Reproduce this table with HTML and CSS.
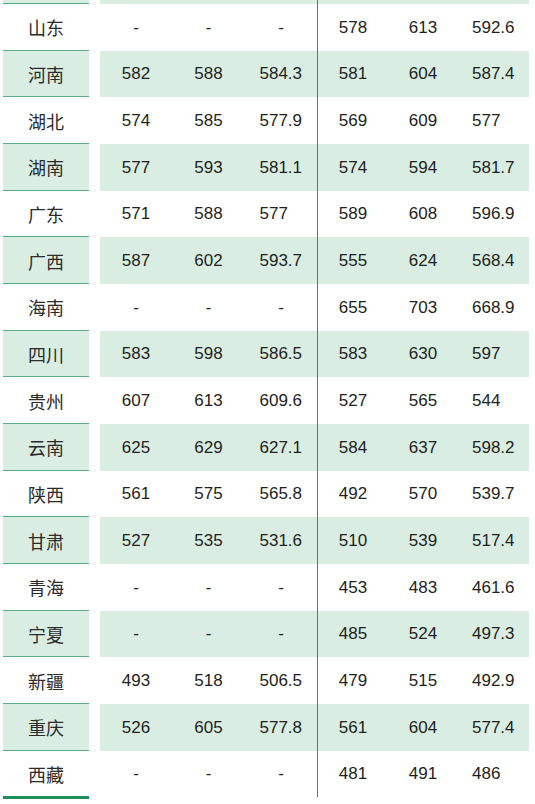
FILE: index.html
```html
<!DOCTYPE html>
<html lang="zh">
<head>
<meta charset="utf-8">
<title>分数表</title>
<link rel="stylesheet" href="styles.css">
</head>
<body>
<div class="table">
  <div class="row alt stub"><div class="name"></div><div class="data"><span></span><span></span><span></span><span class="split"></span><span></span><span></span></div></div>

  <div class="row"><div class="name">山东</div><div class="data"><span>-</span><span>-</span><span>-</span><span class="split">578</span><span>613</span><span><i>592.6</i></span></div></div>
  <div class="row alt"><div class="name">河南</div><div class="data"><span>582</span><span>588</span><span><i>584.3</i></span><span class="split">581</span><span>604</span><span><i>587.4</i></span></div></div>
  <div class="row"><div class="name">湖北</div><div class="data"><span>574</span><span>585</span><span><i>577.9</i></span><span class="split">569</span><span>609</span><span><i>577</i></span></div></div>
  <div class="row alt"><div class="name">湖南</div><div class="data"><span>577</span><span>593</span><span><i>581.1</i></span><span class="split">574</span><span>594</span><span><i>581.7</i></span></div></div>
  <div class="row"><div class="name">广东</div><div class="data"><span>571</span><span>588</span><span><i>577</i></span><span class="split">589</span><span>608</span><span><i>596.9</i></span></div></div>
  <div class="row alt"><div class="name">广西</div><div class="data"><span>587</span><span>602</span><span><i>593.7</i></span><span class="split">555</span><span>624</span><span><i>568.4</i></span></div></div>
  <div class="row"><div class="name">海南</div><div class="data"><span>-</span><span>-</span><span>-</span><span class="split">655</span><span>703</span><span><i>668.9</i></span></div></div>
  <div class="row alt"><div class="name">四川</div><div class="data"><span>583</span><span>598</span><span><i>586.5</i></span><span class="split">583</span><span>630</span><span><i>597</i></span></div></div>
  <div class="row"><div class="name">贵州</div><div class="data"><span>607</span><span>613</span><span><i>609.6</i></span><span class="split">527</span><span>565</span><span><i>544</i></span></div></div>
  <div class="row alt"><div class="name">云南</div><div class="data"><span>625</span><span>629</span><span><i>627.1</i></span><span class="split">584</span><span>637</span><span><i>598.2</i></span></div></div>
  <div class="row"><div class="name">陕西</div><div class="data"><span>561</span><span>575</span><span><i>565.8</i></span><span class="split">492</span><span>570</span><span><i>539.7</i></span></div></div>
  <div class="row alt"><div class="name">甘肃</div><div class="data"><span>527</span><span>535</span><span><i>531.6</i></span><span class="split">510</span><span>539</span><span><i>517.4</i></span></div></div>
  <div class="row"><div class="name">青海</div><div class="data"><span>-</span><span>-</span><span>-</span><span class="split">453</span><span>483</span><span><i>461.6</i></span></div></div>
  <div class="row alt"><div class="name">宁夏</div><div class="data"><span>-</span><span>-</span><span>-</span><span class="split">485</span><span>524</span><span><i>497.3</i></span></div></div>
  <div class="row"><div class="name">新疆</div><div class="data"><span>493</span><span>518</span><span><i>506.5</i></span><span class="split">479</span><span>515</span><span><i>492.9</i></span></div></div>
  <div class="row alt"><div class="name">重庆</div><div class="data"><span>526</span><span>605</span><span><i>577.8</i></span><span class="split">561</span><span>604</span><span><i>577.4</i></span></div></div>
  <div class="row last"><div class="name">西藏</div><div class="data"><span>-</span><span>-</span><span>-</span><span class="split">481</span><span>491</span><span><i>486</i></span></div></div>
</div>
</body>
</html>
```

FILE: styles.css
```css
html, body {
  margin: 0;
  padding: 0;
  background: #ffffff;
}

body {
  font-family: "Liberation Sans", Arial, "Noto Sans CJK SC", sans-serif;
  color: #231f20;
}

.table {
  padding-left: 3px;
  width: 526px;
}

.row {
  display: flex;
  height: 46.67px;
  column-gap: 11px;
}

.row.stub {
  height: 4px;
}

.name {
  box-sizing: border-box;
  width: 86px;
  flex: none;
  border-bottom: 1px solid #5aab86;
  display: flex;
  align-items: center;
  justify-content: center;
  font-family: "Noto Sans CJK SC", sans-serif;
  font-size: 18px;
  color: #2b2b2b;
  padding-top: 1px;
}

.row.last {
  height: 48px;
}

.row.last .name {
  border-bottom: 3px solid #1f8e5c;
}

.row.last .data {
  height: 46px;
}

.data {
  width: 429px;
  flex: none;
  display: grid;
  grid-template-columns: 72px 73px 72px 71px 70px 71px;
  font-size: 17px;
}

.data span {
  box-sizing: border-box;
  display: flex;
  align-items: center;
  justify-content: center;
  padding-top: 1px;
}

.data span.split {
  border-left: 1px solid #1f9a62;
}

.data i {
  font-style: normal;
  display: inline-block;
  width: 43px;
  text-align: left;
}

.row.alt .name,
.row.alt .data {
  background: #d9ede3;
}
```
